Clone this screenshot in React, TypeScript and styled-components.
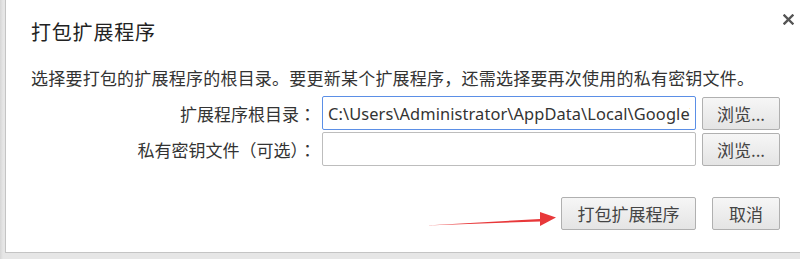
import React from 'react';
import styled, {createGlobalStyle} from 'styled-components';

const CJK = `'Noto Sans CJK SC', 'Noto Sans', sans-serif`;

const GlobalStyle = createGlobalStyle`
  html, body {
    margin: 0;
    padding: 0;
    background: #dedede;
    overflow: hidden;
  }
  body {
    font-family: ${CJK};
  }
`;

const App: React.FC = () => {
  return (
    <>
      <GlobalStyle />
      <Page>
        <Dialog>
          <CloseButton aria-label="close">
            <svg width="11" height="11" viewBox="0 0 11 11">
              <path d="M1.5 1.5 L9.5 9.5 M9.5 1.5 L1.5 9.5" stroke="#555" strokeWidth="2.4" strokeLinecap="square" />
            </svg>
          </CloseButton>

          <Title>打包扩展程序</Title>
          <Description>
            选择要打包的扩展程序的根目录。要更新某个扩展程序，还需选择要再次使用的私有密钥文件。
          </Description>

          <FormGrid>
            <Label>扩展程序根目录：</Label>
            <PathInput focused readOnly value="C:\Users\Administrator\AppData\Local\Google\Chrome\User Data" />
            <Button>浏览...</Button>

            <Label>私有密钥文件（可选）：</Label>
            <PathInput readOnly value="" />
            <Button>浏览...</Button>
          </FormGrid>

          <Footer>
            <Button wide>打包扩展程序</Button>
            <Button>取消</Button>
          </Footer>

          <Arrow width="140" height="24" viewBox="0 0 140 24">
            <path d="M0 16.5 L114 10 L114 3 L130 8.5 L114 17 L114 12.5 Z" fill="#e8383a" />
          </Arrow>
        </Dialog>
      </Page>
    </>
  );
};

const Page = styled.div`
  width: 800px;
  height: 259px;
  padding-left: 5px;
  box-sizing: border-box;
  background: linear-gradient(to right, #d6d6d6, #e6e6e6 3px);
`;

const Dialog = styled.div`
  position: relative;
  width: 795px;
  height: 253px;
  background: #fff;
  box-sizing: border-box;
  padding: 0 20px 0 25px;
  border-left: 1px solid #c4c4c4;
  border-bottom: 1px solid #c4c4c4;
  display: flex;
  flex-direction: column;
`;

const CloseButton = styled.div`
  position: absolute;
  top: 14px;
  right: 6px;
  width: 11px;
  height: 11px;
  line-height: 0;
`;

const Title = styled.h1`
  margin: 18px 0 0 0;
  font-size: 20px;
  font-weight: normal;
  color: #222;
  line-height: 28px;
  letter-spacing: 0.8px;
`;

const Description = styled.p`
  margin: 20px 0 0 0;
  font-size: 17px;
  color: #333;
  line-height: 24px;
  letter-spacing: 0.22px;
  white-space: nowrap;
`;

const FormGrid = styled.div`
  display: grid;
  grid-template-columns: 1fr 374px 78px;
  grid-auto-rows: 34px;
  column-gap: 6px;
  row-gap: 2px;
  margin-top: 6px;
  align-items: center;
`;

const Label = styled.label`
  justify-self: end;
  margin-right: 0;
  font-family: 'Noto Sans CJK TC', 'Noto Sans CJK SC', sans-serif;
  font-size: 17px;
  color: #333;
  white-space: nowrap;
`;

const PathInput = styled.input<{focused?: boolean}>`
  width: 100%;
  height: 34px;
  box-sizing: border-box;
  border: 1px solid ${({focused}) => (focused ? '#5b8fe6' : '#bdbdbd')};
  border-radius: 2px;
  padding: 0 5px;
  font-family: 'Noto Sans', 'Open Sans', sans-serif;
  font-size: 16.4px;
  letter-spacing: 0.1px;
  color: #333;
  background: #fff;
  outline: none;
`;

const Button = styled.button<{wide?: boolean}>`
  height: 33px;
  width: ${({wide}) => (wide ? '135px' : '68px')};
  box-sizing: border-box;
  border: 1px solid #b0b0b0;
  border-radius: 2px;
  background: linear-gradient(to bottom, #f6f6f6, #e4e4e4);
  font-family: ${CJK};
  font-size: 17px;
  color: #444;
  padding: 0;
  ${FormGrid} & {
    width: 78px;
  }
`;

const Footer = styled.div`
  display: flex;
  justify-content: flex-end;
  gap: 16px;
  margin-top: 31px;
`;

const Arrow = styled.svg`
  position: absolute;
  left: 420px;
  top: 209px;
`;

export default App;
